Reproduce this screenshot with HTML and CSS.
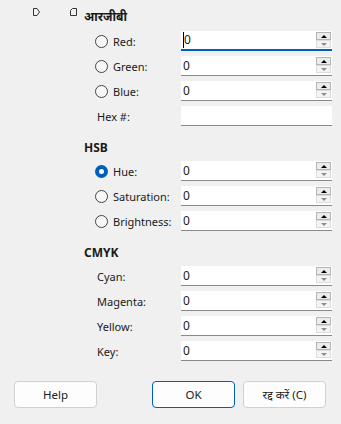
FILE: index.html
```html
<!DOCTYPE html>
<html lang="hi">
<head>
    <meta charset="UTF-8">
    <meta name="viewport" content="width=device-width, initial-scale=1.0">
    <title>रंग चुनें</title>
    <link rel="stylesheet" href="styles.css">
</head>
<body>
    <div class="dialog">
        <div class="section">
            <div class="title-row">
                <svg class="marker marker-right" width="8" height="8" viewBox="0 0 8 8">
                    <path d="M0.5 0.5 H4 L6.5 4 L4 7.5 H0.5 Z" fill="none" stroke="#333" stroke-width="1"></path>
                </svg>
                <svg class="marker marker-left" width="8" height="8" viewBox="0 0 8 8">
                    <path d="M6.5 0.5 H2.5 L0.5 2.5 V7.5 H6.5 Z" fill="none" stroke="#333" stroke-width="1"></path>
                </svg>
                <span class="section-title">आरजीबी</span>
            </div>
            <div class="rows">
                <div class="row">
                    <label class="option"><span class="radio"></span>Red:</label>
                    <div class="field focused"><span class="value">0</span><div class="spin"><span class="up"></span><span class="down"></span></div></div>
                </div>
                <div class="row">
                    <label class="option"><span class="radio"></span>Green:</label>
                    <div class="field"><span class="value">0</span><div class="spin"><span class="up"></span><span class="down"></span></div></div>
                </div>
                <div class="row">
                    <label class="option"><span class="radio"></span>Blue:</label>
                    <div class="field"><span class="value">0</span><div class="spin"><span class="up"></span><span class="down"></span></div></div>
                </div>
                <div class="row">
                    <label class="option plain">Hex #:</label>
                    <div class="field"><span class="value"></span></div>
                </div>
            </div>
        </div>

        <div class="section">
            <div class="title-row"><span class="section-title">HSB</span></div>
            <div class="rows">
                <div class="row">
                    <label class="option"><span class="radio checked"></span>Hue:</label>
                    <div class="field"><span class="value">0</span><div class="spin"><span class="up"></span><span class="down"></span></div></div>
                </div>
                <div class="row">
                    <label class="option"><span class="radio"></span>Saturation:</label>
                    <div class="field"><span class="value">0</span><div class="spin"><span class="up"></span><span class="down"></span></div></div>
                </div>
                <div class="row">
                    <label class="option"><span class="radio"></span>Brightness:</label>
                    <div class="field"><span class="value">0</span><div class="spin"><span class="up"></span><span class="down"></span></div></div>
                </div>
            </div>
        </div>

        <div class="section">
            <div class="title-row"><span class="section-title">CMYK</span></div>
            <div class="rows">
                <div class="row">
                    <label class="option plain">Cyan:</label>
                    <div class="field"><span class="value">0</span><div class="spin"><span class="up"></span><span class="down"></span></div></div>
                </div>
                <div class="row">
                    <label class="option plain">Magenta:</label>
                    <div class="field"><span class="value">0</span><div class="spin"><span class="up"></span><span class="down"></span></div></div>
                </div>
                <div class="row">
                    <label class="option plain">Yellow:</label>
                    <div class="field"><span class="value">0</span><div class="spin"><span class="up"></span><span class="down"></span></div></div>
                </div>
                <div class="row">
                    <label class="option plain">Key:</label>
                    <div class="field"><span class="value">0</span><div class="spin"><span class="up"></span><span class="down"></span></div></div>
                </div>
            </div>
        </div>

        <div class="buttons">
            <button class="btn help">Help</button>
            <div class="spacer"></div>
            <button class="btn primary">OK</button>
            <button class="btn">रद्द करें (C)</button>
        </div>
    </div>
</body>
</html>
```

FILE: styles.css
```css
:root {
    --background: #f0f0f0;
    --field-bg: #ffffff;
    --field-line: #8a8a8a;
    --accent: #005fb8;
    --text: #1a1a1a;
    --button-border: #d0d0d0;
}

* {
    margin: 0;
    padding: 0;
    box-sizing: border-box;
}

body {
    font-family: 'Noto Sans', 'Noto Sans Devanagari', 'Open Sans', sans-serif;
    font-size: 11px;
    background: var(--background);
    color: var(--text);
    width: 341px;
    height: 424px;
    overflow: hidden;
}

.dialog {
    padding: 6px 9px 0 14px;
}

.section {
    display: flex;
    flex-direction: column;
    margin-bottom: 11px;
}

.section:first-child .title-row {
    margin-bottom: 5px;
}

.title-row {
    display: flex;
    align-items: center;
    height: 20px;
    padding-left: 70px;
    margin-bottom: 4px;
    position: relative;
}

.marker {
    position: absolute;
    top: 2px;
}

.marker-right {
    left: 19px;
}

.marker-left {
    left: 56px;
}

.section-title {
    font-weight: 700;
    font-size: 12px;
}

.rows {
    display: flex;
    flex-direction: column;
    gap: 5px;
}

.row {
    display: flex;
    align-items: center;
    height: 20px;
    padding-left: 81px;
}

.option {
    display: flex;
    align-items: center;
    gap: 5px;
    width: 86px;
}

.option.plain {
    padding-left: 2px;
}

.radio {
    width: 13px;
    height: 13px;
    border: 1px solid #444;
    border-radius: 50%;
    background: #f7f7f7;
    flex-shrink: 0;
}

.radio.checked {
    border: 4px solid var(--accent);
    background: #fff;
}

.field {
    display: flex;
    align-items: center;
    width: 151px;
    height: 20px;
    background: var(--field-bg);
    border-bottom: 1px solid var(--field-line);
    padding-left: 2px;
    font-size: 12px;
}

.field.focused {
    border-bottom: 2px solid var(--accent);
}

.field.focused .value {
    border-left: 1px solid #000;
}

.value {
    flex: 1;
    line-height: 16px;
}

.spin {
    display: flex;
    flex-direction: column;
    width: 15px;
    height: 16px;
    margin-right: 1px;
    align-self: flex-start;
    margin-top: 1px;
}

.spin span {
    flex: 1;
    display: flex;
    align-items: center;
    justify-content: center;
    background: #f4f4f4;
    border: 1px solid #dcdcdc;
}

.spin .up {
    border-color: #b4b4b4;
    background: #ececec;
}

.spin .up::after,
.spin .down::after {
    content: "";
    border-left: 3px solid transparent;
    border-right: 3px solid transparent;
}

.spin .up::after {
    border-bottom: 3px solid #000;
}

.spin .down::after {
    border-top: 3px solid #8c8c8c;
}

.buttons {
    display: flex;
    align-items: center;
    margin-top: 20px;
    gap: 8px;
    padding-right: 6px;
}

.spacer {
    flex: 1;
}

.btn {
    width: 83px;
    height: 27px;
    background: #fdfdfd;
    border: 1px solid var(--button-border);
    border-radius: 4px;
    font-family: inherit;
    font-size: 11.5px;
    color: var(--text);
}

.btn.primary {
    border-color: var(--accent);
}
```
